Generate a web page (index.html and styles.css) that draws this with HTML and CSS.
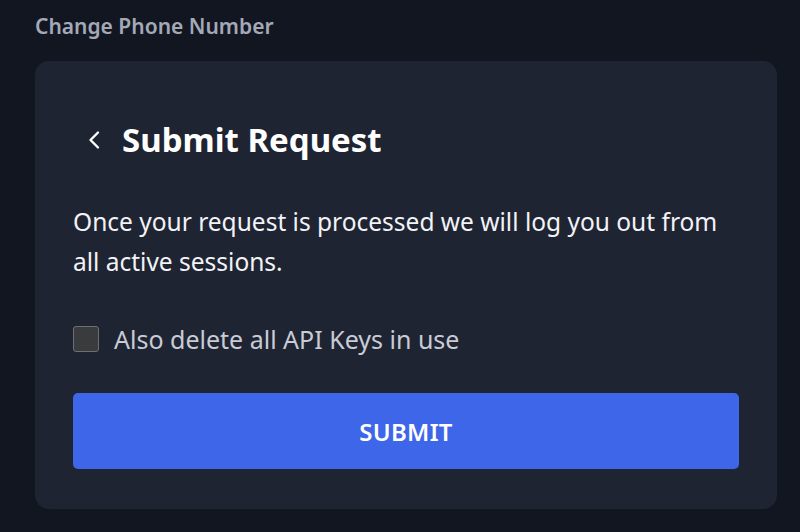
FILE: index.html
```html
<!DOCTYPE html>
<html>
<head>
<meta charset="utf-8">
<link rel="stylesheet" href="styles.css">
</head>
<body>
<div class="page">
  <div class="section-title">Change Phone Number</div>
  <div class="card">
    <div class="card-head">
      <button class="back" aria-label="Back">
        <svg width="12" height="20" viewBox="0 0 12 20"><path d="M10 2.5 L2.5 10 L10 17.5" fill="none" stroke="#ffffff" stroke-width="2.4" stroke-linecap="round" stroke-linejoin="round"/></svg>
      </button>
      <h1 class="title">Submit Request</h1>
    </div>
    <p class="desc">Once your request is processed we will log you out from all active sessions.</p>
    <label class="check">
      <span class="box"></span>
      <span class="check-label">Also delete all API Keys in use</span>
    </label>
    <button class="submit">SUBMIT</button>
  </div>
</div>
</body>
</html>
```
FILE: styles.css
```css
html, body {
  margin: 0;
  padding: 0;
  background: #121621;
  font-family: "Noto Sans", "Liberation Sans", sans-serif;
}
.page {
  padding: 12px 23px 24px 35px;
}
.section-title {
  color: #a4a9b8;
  font-size: 21px;
  font-weight: 600;
  line-height: 28px;
}
.card {
  margin-top: 21px;
  background: #1f2432;
  border-radius: 14px;
  padding: 57px 38px 40px 38px;
}
.card-head {
  display: flex;
  align-items: center;
  gap: 22px;
  padding-left: 15px;
}
.back {
  background: none;
  border: 0;
  padding: 0;
  display: flex;
  cursor: pointer;
}
.title {
  margin: 0;
  color: #ffffff;
  font-size: 33px;
  font-weight: 700;
  line-height: 44px;
}
.desc {
  margin: 40px 0 0 0;
  color: #f2f3f7;
  font-size: 24.5px;
  line-height: 40px;
}
.check {
  display: flex;
  align-items: center;
  gap: 15px;
  margin-top: 42px;
}
.box {
  width: 24px;
  height: 24px;
  background: #3a3b3d;
  border: 1px solid #6e6f72;
  border-radius: 3px;
}
.check-label {
  color: #c9ccd6;
  font-size: 25px;
  line-height: 30px;
}
.submit {
  display: block;
  width: 100%;
  margin-top: 39px;
  height: 76px;
  border: 0;
  border-radius: 5px;
  background: #3e66e8;
  color: #ffffff;
  font-family: inherit;
  font-size: 24px;
  font-weight: 600;
  letter-spacing: 0.3px;
}
```
